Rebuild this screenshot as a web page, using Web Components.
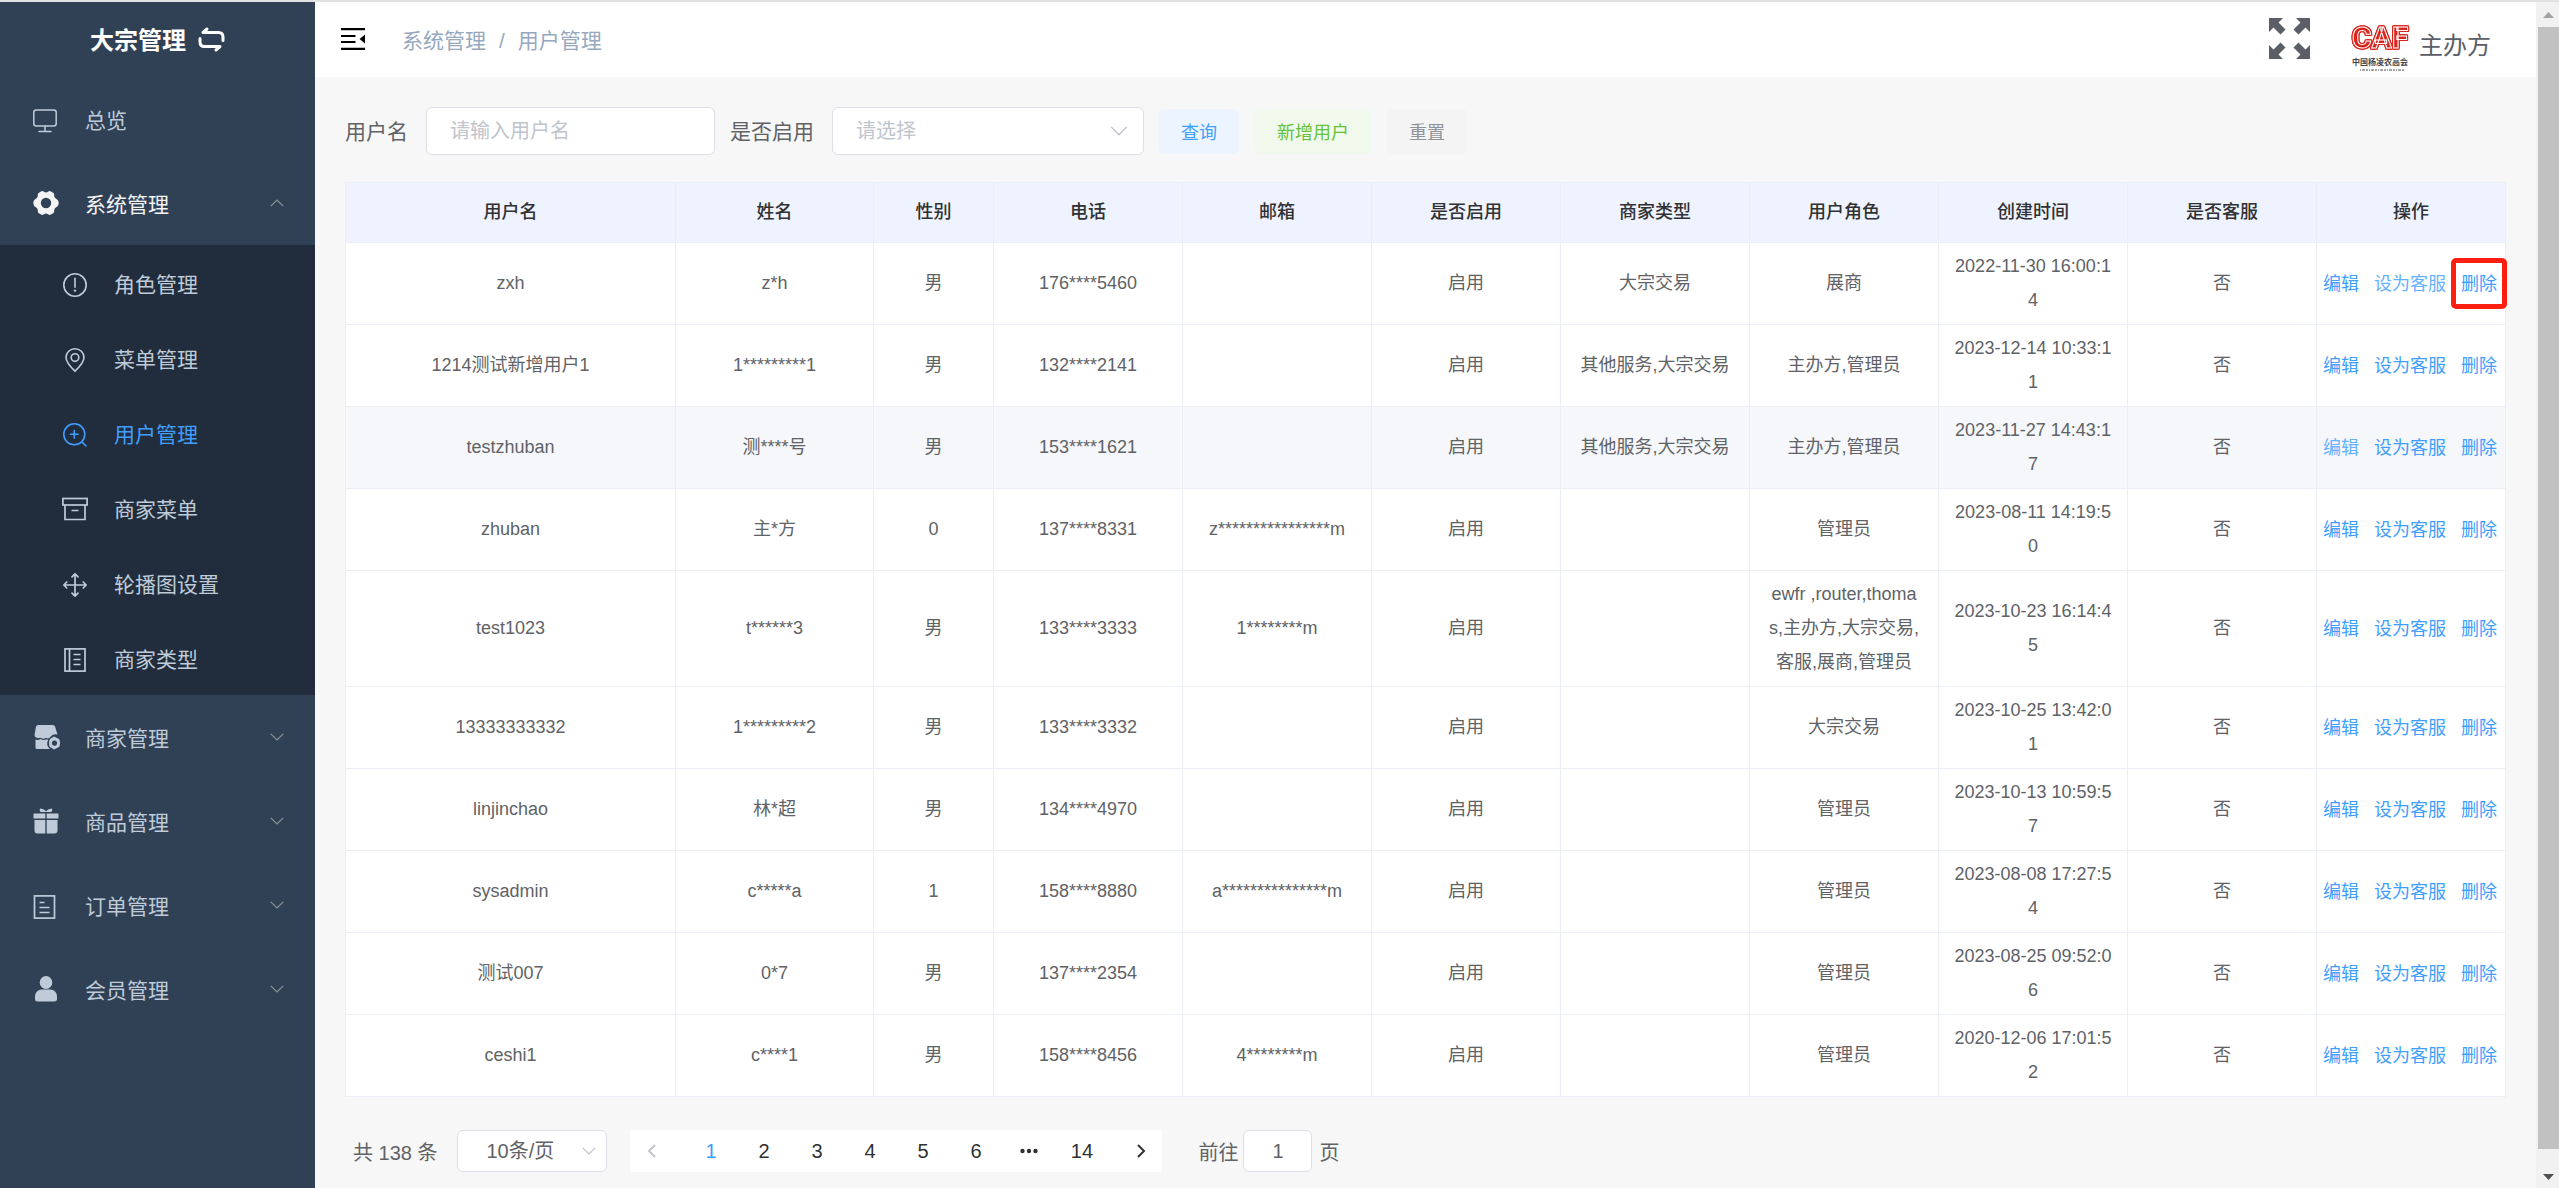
<!DOCTYPE html>
<html lang="zh-CN">
<head>
<meta charset="utf-8">
<title>用户管理</title>
<style>
  html, body { margin: 0; }
  body {
    font-family: "Liberation Sans", "Noto Sans CJK SC", sans-serif;
    font-size: 20px;
    color: #606266;
    background: #f7f7f7;
  }
</style>
</head>
<body>
<admin-app>
  <side-menu slot="side">
    <menu-item icon="monitor">总览</menu-item>
    <menu-item icon="gear" group open>系统管理
      <menu-item slot="sub" level="2" icon="warn">角色管理</menu-item>
      <menu-item slot="sub" level="2" icon="pin">菜单管理</menu-item>
      <menu-item slot="sub" level="2" icon="zoom" active>用户管理</menu-item>
      <menu-item slot="sub" level="2" icon="box">商家菜单</menu-item>
      <menu-item slot="sub" level="2" icon="move">轮播图设置</menu-item>
      <menu-item slot="sub" level="2" icon="book">商家类型</menu-item>
    </menu-item>
    <menu-item icon="shop" group>商家管理</menu-item>
    <menu-item icon="gift" group>商品管理</menu-item>
    <menu-item icon="order" group>订单管理</menu-item>
    <menu-item icon="user" group>会员管理</menu-item>
  </side-menu>
  <top-bar slot="top"></top-bar>
  <filter-bar></filter-bar>
  <user-table></user-table>
  <page-nav></page-nav>
  <scroll-rail slot="rail"></scroll-rail>
</admin-app>

<script>
const ICONS = {
  swap: ['0 0 27 25', '<g fill="none" stroke="currentColor" stroke-width="3" stroke-linecap="round" stroke-linejoin="round"><path d="M9 2 5 5.500H20.500Q25 5.500 25 10V13.500"/><path d="M18 23 22 19.500H6.500Q2 19.500 2 15V11.500"/></g>'],
  monitor: ['0 -3 26 26', '<g fill="none" stroke="currentColor" stroke-width="1.500" stroke-linecap="round"><rect x=".8" y="1" width="22.400" height="16" rx="2.500"/><path d="M12 17v5.500M6 22.500h12"/></g>'],
  gear: ['0 0 26 26', '<path fill="currentColor" fill-rule="evenodd" d="M8 1.500Q9.500.5 11 1.800Q13 3 15 1.800Q16.500.5 18 1.500L20.500 3Q21.500 4 21.200 6Q21.500 8 23.500 9Q25.500 10 25.800 13Q25.500 16 23.500 17Q21.500 18 21.200 20Q21.500 22 20.500 23L18 24.500Q16.500 25.500 15 24.200Q13 23 11 24.200Q9.500 25.500 8 24.500L5.500 23Q4.500 22 4.800 20Q4.500 18 2.500 17Q.5 16 .2 13Q.5 10 2.500 9Q4.500 8 4.800 6Q4.500 4 5.500 3ZM13 7.800a5.200 5.200 0 1 0 0 10.400a5.200 5.200 0 1 0 0-10.400Z"/>'],
  warn: ['-1 -3 26 26', '<circle cx="12" cy="12" r="11.200" fill="none" stroke="currentColor" stroke-width="1.600"/><path d="M12 5.200v9" stroke="currentColor" stroke-width="1.600" stroke-linecap="round"/><circle cx="12" cy="17.600" r="1.200" fill="currentColor"/>'],
  pin: ['-1 -3 26 26', '<g fill="none" stroke="currentColor" stroke-width="1.600"><path d="M12 23.200Q3 14.500 3 9.500a9 8.800 0 0 1 18 0Q21 14.500 12 23.200Z"/><circle cx="12" cy="9.600" r="3.800"/></g>'],
  zoom: ['-1 -3 26 26', '<g fill="none" stroke="currentColor" stroke-width="1.600" stroke-linecap="round"><circle cx="11.300" cy="11.300" r="10.500"/><path d="m19 19 4 4M11.300 7.500v7.600M7.500 11.300h7.600"/></g>'],
  box: ['0 -2 26 26', '<g fill="none" stroke="currentColor" stroke-width="1.700"><rect x=".9" y="1.500" width="24.200" height="6.500"/><path d="M3 8v14.500h20V8M9.500 13.500h7"/></g>'],
  move: ['-1 -3 26 26', '<g fill="none" stroke="currentColor" stroke-width="1.700" stroke-linecap="round" stroke-linejoin="round"><path d="M12 1v22M1 12h22M9 3.800 12 .8l3 3M9 20.200l3 3 3-3M3.800 9l-3 3 3 3M20.200 9l3 3-3 3"/></g>'],
  book: ['-1 -3 26 26', '<g fill="none" stroke="currentColor" stroke-width="1.700"><rect x="2" y=".9" width="20" height="22.200"/><path d="M6.500 1v22M10.500 6.500h7M10.500 11.500h7M10.500 16.500h7"/></g>'],
  shop: ['-1 0 26 26', '<g fill="currentColor"><path d="M4 1h15q1.500 0 2 1.500l2.500 8q-4.500-.8-7 2.200q-2 3-4.500 1q-2.500 2-5.500 0Q1 15 .5 11L2 2.500Q2.500 1 4 1Z"/><path d="M1.500 15.500q2.500 1 5-.6q3 2 6 .4q.6.500 1.600.4q-2.600 5.300 1.900 9.300H3q-1.500 0-1.500-1.500Z"/><path fill-rule="evenodd" d="m20 12.500 5 2.500q1 1 1 4q0 3-1 4l-5 2.500-4-2.500q-1-1-1-4q0-3 1-4ZM20.500 16.500a2.600 2.600 0 1 0 0 5.200a2.600 2.600 0 1 0 0-5.200Z"/></g>'],
  gift: ['0 0 26 26', '<g fill="currentColor"><path d="M7 .5q4 0 6 2.700Q15 .5 19 .5q.8 1.500-.5 3.500h-11Q6 2 7 .5ZM1 5.500h11.300v5H.5V6q0-.5.500-.5ZM13.700 5.500H25q.5 0 .5.500v4.500H13.700ZM1.500 12h10.800v13.500H4.500q-3 0-3-3ZM13.700 12h10.800v10.500q0 3-3 3h-7.800Z"/></g>'],
  order: ['0 -3 26 26', '<g fill="none" stroke="currentColor" stroke-width="1.700"><rect x="1.500" y=".9" width="20" height="22.200"/><path d="M6.500 7.500h5M6.500 12.500h10M6.500 17.500h10"/></g>'],
  user: ['-1 0 26 26', '<g fill="currentColor"><ellipse cx="12" cy="6.500" rx="6.300" ry="6.500"/><path d="M7 13.500h10q6 1.500 6 7V23q0 2.500-3 2.500H4q-3 0-3-2.500v-2.500q0-5.500 6-7Z"/></g>'],
  fold: ['0 0 24 22', '<path d="M0 1.200h24M0 8h14.500M0 14h14.500M0 20.800h24" stroke="currentColor" stroke-width="2.200"/><path d="m18.500 11 5.500-4.500v9Z" fill="currentColor"/>'],
  full: ['0 0 41 41', '<g fill="currentColor"><path d="M0 0h14L9.500 4.500l7 7-5 5-7-7L0 14Z"/><path transform="translate(41) scale(-1 1)" d="M0 0h14L9.500 4.500l7 7-5 5-7-7L0 14Z"/><path transform="translate(0 41) scale(1 -1)" d="M0 0h14L9.500 4.500l7 7-5 5-7-7L0 14Z"/><path transform="translate(41 41) scale(-1 -1)" d="M0 0h14L9.500 4.500l7 7-5 5-7-7L0 14Z"/></g>'],
  down: ['0 0 14 8', '<path d="m.8.800 6.200 6.200 6.200-6.200" fill="none" stroke="currentColor" stroke-width="1.200"/>'],
  up: ['0 0 14 8', '<path d="m.8 7.200 6.200-6.200 6.200 6.200" fill="none" stroke="currentColor" stroke-width="1.200"/>'],
  prev: ['0 0 9 14', '<path d="M8 1 2 7l6 6" fill="none" stroke="currentColor" stroke-width="2"/>'],
  next: ['0 0 9 14', '<path d="m1 1 6 6-6 6" fill="none" stroke="currentColor" stroke-width="2"/>'],
  dots: ['0 0 18 6', '<g fill="currentColor"><circle cx="2.500" cy="3" r="2.200"/><circle cx="9" cy="3" r="2.200"/><circle cx="15.500" cy="3" r="2.200"/></g>']
};
const icon = (name, w, h = w) =>
  `<svg aria-hidden="true" width="${w}" height="${h}" viewBox="${ICONS[name][0]}">${ICONS[name][1]}</svg>`;

const BASE = `
  *, *::before, *::after { box-sizing: border-box; }
  svg { display: block; flex: none; overflow: visible; }
  a { color: inherit; text-decoration: none; }
  button, input, select { font: inherit; color: inherit; margin: 0; }
  button { border: 0; padding: 0; background: none; cursor: pointer; }
  input, select { border: 1px solid #dcdfe6; border-radius: 6px; background: #fff; outline: none; appearance: none; }
`;
class Base extends HTMLElement {
  paint(css, html) {
    this.attachShadow({ mode: 'open' }).innerHTML = `<style>${BASE}${css}</style>${html}`;
  }
}

customElements.define('admin-app', class extends Base {
  connectedCallback() {
    this.paint(`
      :host { display: flex; min-height: 100vh; border-top: 2px solid #e1e1e1; box-sizing: border-box; }
      .main { flex: 1; min-width: 0; }
      main { padding: 30px; padding-bottom: 16px; }
    `, `<slot name="side"></slot>
      <div class="main"><slot name="top"></slot><main><slot></slot></main></div>
      <slot name="rail"></slot>`);
  }
});

customElements.define('side-menu', class extends Base {
  connectedCallback() {
    this.paint(`
      :host { display: block; width: 315px; flex: none; background: #304156; }
      h1 { display: flex; align-items: center; justify-content: center; gap: 12px; height: 75px; margin: 0; padding-bottom: 2px; font-size: 24px; color: #fff; }
      h1 svg { margin-top: 2px; }
    `, `<h1>大宗管理 ${icon('swap', 27, 25)}</h1><nav><slot></slot></nav>`);
  }
});

customElements.define('menu-item', class extends Base {
  connectedCallback() {
    const group = this.hasAttribute('group');
    const open = this.hasAttribute('open');
    const inner = `${icon(this.getAttribute('icon'), 26)}<span><slot></slot></span>`;
    this.paint(`
      :host { display: block; color: #bfcbd9; font-size: 21px; }
      .row { display: flex; align-items: center; gap: 26px; width: 100%; height: 84px; padding: 0 31px 0 33px; text-align: left; color: inherit; }
      :host([level="2"]) .row { height: 75px; padding-left: 62px; }
      :host([open]) { color: #f4f4f5; }
      :host([active]) { color: #409eff; }
      .arrow { margin-left: auto; color: #909399; }
      .sub { background: #212d3c; }
    `, group
      ? `<button class="row" type="button" aria-expanded="${open}">${inner}<span class="arrow">${icon(open ? 'up' : 'down', 14, 8)}</span></button>
         <div class="sub"><slot name="sub"></slot></div>`
      : `<a class="row" href="#">${inner}</a>`);
  }
});

customElements.define('top-bar', class extends Base {
  connectedCallback() {
    this.paint(`
      :host { display: flex; align-items: center; height: 75px; padding: 0 45px 2px 26px; background: #fff; box-sizing: border-box; }
      .fold { color: #000; }
      nav { display: flex; align-items: baseline; gap: 13px; margin-left: 37px; font-size: 21px; color: #97a8be; }
      .full { margin-left: auto; color: #5a5e66; }
      .who { display: flex; align-items: center; gap: 11px; margin-left: 42px; padding-top: 12px; font-size: 24px; color: #5a5e66; }
      .who span { padding-bottom: 3px; }
      .caf { font: bold 30px Roboto, "Liberation Sans", sans-serif; fill: #d9251d; stroke: #fff; stroke-width: 1;
        filter: drop-shadow(1px 0 #d9251d) drop-shadow(-1px 0 #d9251d) drop-shadow(0 1px #d9251d) drop-shadow(0 -1px #d9251d); }
      .cn { font: bold 8px "Noto Sans CJK SC", sans-serif; fill: #444; }
    `, `<button class="fold" type="button" aria-label="收起菜单">${icon('fold', 24, 22)}</button>
      <nav><a href="#">系统管理</a><span>/</span><a href="#">用户管理</a></nav>
      <button class="full" type="button" aria-label="全屏">${icon('full', 41)}</button>
      <a class="who" href="#">
        <svg width="56" height="55" viewBox="0 0 56 55">
          <text class="caf" x="28" y="31" text-anchor="middle">CAF</text>
          <text class="cn" x="28" y="48" text-anchor="middle">中国杨凌农高会</text>
          <path d="M8 53h44" stroke="#888" stroke-width="1.500" stroke-dasharray="1 1 3 1 2 1"/>
        </svg><span>主办方</span></a>`);
  }
});

customElements.define('filter-bar', class extends Base {
  connectedCallback() {
    this.paint(`
      :host { display: flex; align-items: center; gap: 15px; margin-bottom: 27px; }
      .field { display: flex; align-items: center; gap: 18px; }
      .actions { display: flex; gap: 16px; }
      label { padding-bottom: 2px; font-size: 21px; }
      input, .pick { width: 289px; }
      input, select { height: 48px; padding: 0 23px; }
      input::placeholder { color: #c0c4cc; opacity: 1; }
      .pick { display: grid; align-items: center; width: 312px; color: #c0c4cc; }
      .pick > * { grid-area: 1 / 1; }
      .pick svg { justify-self: end; margin-right: 16px; pointer-events: none; }
      select { width: 100%; }
      .btn { height: 45px; padding: 0 22px; border-radius: 5px; font-size: 18px; }
      .primary { color: #409eff; background: #ecf5ff; }
      .success { color: #67c23a; background: #f0f9eb; }
      .info { color: #909399; background: #f4f4f5; }
    `, `<div class="field"><label for="name">用户名</label><input id="name" type="text" placeholder="请输入用户名"></div>
      <div class="field"><label for="on">是否启用</label>
        <div class="pick"><select id="on"><option>请选择</option><option>启用</option><option>禁用</option></select>${icon('down', 18, 10)}</div></div>
      <div class="actions"><button class="btn primary" type="button">查询</button>
      <button class="btn success" type="button">新增用户</button>
      <button class="btn info" type="button">重置</button></div>`);
  }
});

const HEAD = ['用户名', '姓名', '性别', '电话', '邮箱', '是否启用', '商家类型', '用户角色', '创建时间', '是否客服', '操作'];
const WIDTHS = [330, 198, 120, 189, 189, 189, 189, 189, 189, 189, 189];
const ROWS = [
  ['zxh', 'z*h', '男', '176****5460', '', '启用', '大宗交易', '展商', '2022-11-30 16:00:14', '否'],
  ['1214测试新增用户1', '1*********1', '男', '132****2141', '', '启用', '其他服务,大宗交易', '主办方,管理员', '2023-12-14 10:33:11', '否'],
  ['testzhuban', '测****号', '男', '153****1621', '', '启用', '其他服务,大宗交易', '主办方,管理员', '2023-11-27 14:43:17', '否'],
  ['zhuban', '主*方', '0', '137****8331', 'z****************m', '启用', '', '管理员', '2023-08-11 14:19:50', '否'],
  ['test1023', 't******3', '男', '133****3333', '1********m', '启用', '', 'ewfr ,router,thomas,主办方,大宗交易,客服,展商,管理员', '2023-10-23 16:14:45', '否'],
  ['13333333332', '1*********2', '男', '133****3332', '', '启用', '', '大宗交易', '2023-10-25 13:42:01', '否'],
  ['linjinchao', '林*超', '男', '134****4970', '', '启用', '', '管理员', '2023-10-13 10:59:57', '否'],
  ['sysadmin', 'c*****a', '1', '158****8880', 'a***************m', '启用', '', '管理员', '2023-08-08 17:27:54', '否'],
  ['测试007', '0*7', '男', '137****2354', '', '启用', '', '管理员', '2023-08-25 09:52:06', '否'],
  ['ceshi1', 'c****1', '男', '158****8456', '4********m', '启用', '', '管理员', '2020-12-06 17:01:52', '否']
];
customElements.define('user-table', class extends Base {
  connectedCallback() {
    const rows = ROWS.map((r, i) => `<tr${i === 2 ? ' class="hover"' : ''}>${r.map(c => `<td>${c}</td>`).join('')}
      <td class="act"><div><button type="button"${i === 2 ? ' class="lit"' : ''}>编辑</button><button type="button"${i === 0 ? ' class="lit"' : ''}>设为客服</button><button type="button"${i === 0 ? ' class="mark"' : ''}>删除</button></div></td></tr>`).join('');
    this.paint(`
      :host { display: block; font-size: 18px; line-height: 34px; }
      table { width: 100%; table-layout: fixed; border-spacing: 0; border: solid #ebeef5; border-width: 1px 0 0 1px; background: #fff; }
      th, td { padding: 6px 15px 7px; border: solid #ebeef5; border-width: 0 1px 1px 0; text-align: center; word-break: break-all; }
      th { padding: 12px 15px 13px; font-weight: 500; color: #303133; background: #eef3ff; }
      .hover td { background: #f5f7fa; }
      td.act { padding-left: 0; padding-right: 2px; }
      .act div { display: flex; justify-content: center; gap: 15px; padding-top: 2px; }
      .act button { color: #409eff; line-height: 34px; white-space: nowrap; }
      .act .lit { color: #66b1ff; }
      .mark { position: relative; }
      .mark::after { content: ""; position: absolute; inset: -9px -10px -8px; border: 5px solid #ff1f10; border-radius: 5px; }
    `, `<table><colgroup>${WIDTHS.map(w => `<col style="width:${w}px">`).join('')}</colgroup>
      <thead><tr>${HEAD.map(h => `<th scope="col">${h}</th>`).join('')}</tr></thead><tbody>${rows}</tbody></table>`);
  }
});

customElements.define('page-nav', class extends Base {
  connectedCallback() {
    this.paint(`
      :host { display: flex; align-items: center; margin-top: 33px; padding-left: 8px; }
      .size { display: grid; align-items: center; width: 150px; margin: 0 23px 0 20px; }
      .size > * { grid-area: 1 / 1; }
      .size svg { justify-self: end; margin-right: 11px; color: #c0c4cc; pointer-events: none; }
      select { width: 100%; height: 42px; padding: 0 28px; }
      nav { display: flex; background: #fff; color: #303133; }
      nav button { display: flex; align-items: center; justify-content: center; width: 53px; height: 42px; }
      nav button[aria-current] { color: #409eff; }
      nav .prev { width: 54px; padding-right: 12px; color: #c0c4cc; }
      nav .next { width: 54px; padding-left: 12px; }
      label { margin: 0 5px 0 36px; }
      input { width: 69px; height: 42px; margin-right: 7px; text-align: center; }
    `, `<span>共 138 条</span>
      <div class="size"><select aria-label="每页条数"><option>10条/页</option><option>20条/页</option></select>${icon('down', 14, 8)}</div>
      <nav><button class="prev" type="button" aria-label="上一页">${icon('prev', 9, 14)}</button>
      <button type="button" aria-current="page">1</button>${[2, 3, 4, 5, 6].map(n => `<button type="button">${n}</button>`).join('')}
      <button type="button" aria-label="更多">${icon('dots', 18, 6)}</button><button type="button">14</button>
      <button class="next" type="button" aria-label="下一页">${icon('next', 9, 14)}</button></nav>
      <label for="go">前往</label><input id="go" type="text" value="1"><span>页</span>`);
  }
});

customElements.define('scroll-rail', class extends Base {
  connectedCallback() {
    this.paint(`
      :host { display: flex; flex-direction: column; width: 23px; flex: none; padding-left: 2px; background: #f1f1f1; box-sizing: border-box; }
      .end { display: flex; align-items: center; justify-content: center; height: 25px; }
      .end:last-child { height: 39px; padding-top: 16px; }
      .thumb { flex: 1; background: #c1c1c1; }
    `, `<div class="end"><svg width="11" height="6"><path d="M0 6 5.500 0 11 6Z" fill="#a3a3a3"/></svg></div>
      <div class="thumb"></div>
      <div class="end"><svg width="11" height="6"><path d="M0 0h11L5.500 6Z" fill="#505050"/></svg></div>`);
  }
});
</script>
</body>
</html>
